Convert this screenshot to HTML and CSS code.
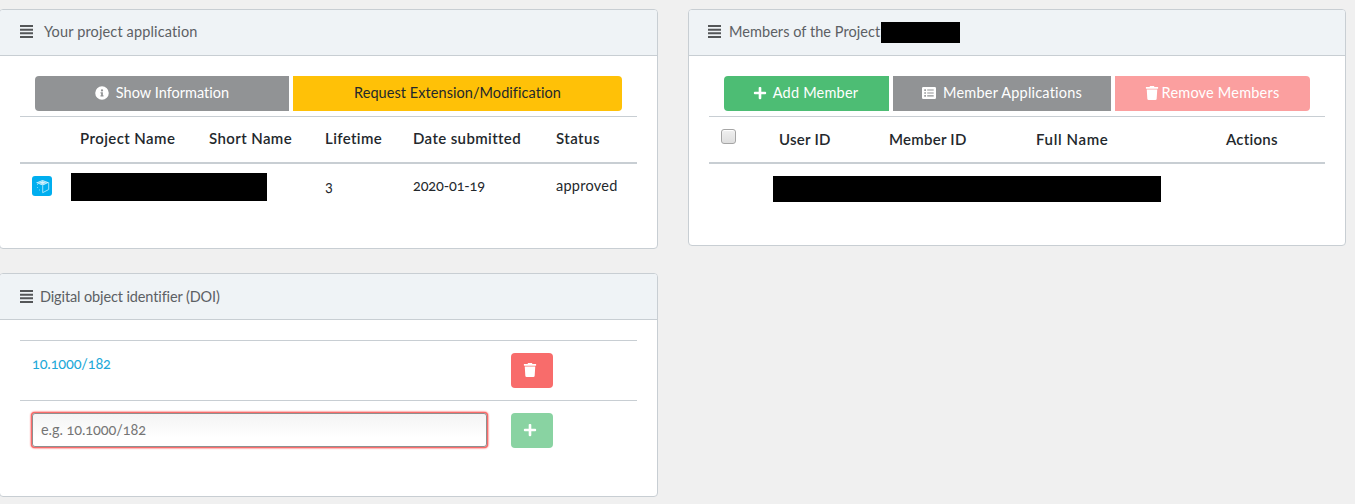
FILE: index.html
```html
<!DOCTYPE html>
<html lang="en">
<head>
<meta charset="utf-8">
<title>Project overview</title>
<link rel="stylesheet" href="styles.css">
</head>
<body>
<svg class="defs" aria-hidden="true">
  <symbol id="bars" viewBox="0 0 13 13"><path d="M0 0h13v2H0zM0 3.67h13v2H0zM0 7.33h13v2H0zM0 11h13v2H0z"/></symbol>
  <symbol id="info" viewBox="0 0 512 512"><path d="M256 8a248 248 0 1 0 0 496 248 248 0 0 0 0-496zm0 110a42 42 0 1 1 0 84 42 42 0 0 1 0-84zm56 254c0 7-5 12-12 12h-88c-7 0-12-5-12-12v-24c0-7 5-12 12-12h12v-64h-12c-7 0-12-5-12-12v-24c0-7 5-12 12-12h64c7 0 12 5 12 12v100h12c7 0 12 5 12 12z"/></symbol>
  <symbol id="plus" viewBox="0 0 448 512"><path d="M416 208H272V64c0-18-14-32-32-32h-32c-18 0-32 14-32 32v144H32c-18 0-32 14-32 32v32c0 18 14 32 32 32h144v144c0 18 14 32 32 32h32c18 0 32-14 32-32V304h144c18 0 32-14 32-32v-32c0-18-14-32-32-32z"/></symbol>
  <symbol id="trash" viewBox="0 0 448 512"><path d="M432 32H312l-9-19A24 24 0 0 0 281 0H167a24 24 0 0 0-22 13l-9 19H16A16 16 0 0 0 0 48v32a16 16 0 0 0 16 16h416a16 16 0 0 0 16-16V48a16 16 0 0 0-16-16zM32 128l21 339a48 48 0 0 0 48 45h246a48 48 0 0 0 48-45l21-339z"/></symbol>
  <symbol id="list" viewBox="0 0 14 14"><path fill-rule="evenodd" d="M1.3 1h11.4A1.3 1.3 0 0 1 14 2.3v9.4a1.3 1.3 0 0 1-1.3 1.3H1.3A1.3 1.3 0 0 1 0 11.7V2.3A1.3 1.3 0 0 1 1.3 1zM2.3 3.3v1.6h1.6V3.3zM5.2 3.5v1.1h6.5V3.5zM2.3 6.2v1.6h1.6V6.2zM5.2 6.4v1.1h6.5V6.4zM2.3 9.1v1.6h1.6V9.1zM5.2 9.3v1.1h6.5V9.3z"/></symbol>
</svg>
<main class="page">
  <div class="column">
    <section class="card application">
      <header class="card-header"><svg class="bars"><use href="#bars"/></svg><span class="title-app">Your project application</span></header>
      <div class="card-body">
        <div class="buttons">
          <button class="btn grey show"><svg class="icon"><use href="#info"/></svg><span class="t-show">Show Information</span></button>
          <button class="btn yellow request"><span class="t-request">Request Extension/Modification</span></button>
        </div>
        <div class="thead app-grid"><span></span><span class="h-project">Project Name</span><span class="h-short">Short Name</span><span class="h-life">Lifetime</span><span class="h-date">Date submitted</span><span class="h-status">Status</span></div>
        <div class="app-row app-grid">
          <svg class="cube" viewBox="0 0 20 20"><rect width="20" height="20" rx="3" fill="#00aeef"/><path d="M4 6.8 10.5 4 17 6.5 10.7 9.5z" fill="#d7f3fd"/><path d="M6.5 6.7 10.5 5.1 14.4 6.6 10.6 8.3z" fill="none" stroke="#67cff5" stroke-width=".6"/><path d="M10.7 9.5v7.2l6-3.2V6.5" fill="none" stroke="#c5effc" stroke-width=".8"/><path d="M5 11.5h1M7 14h1M5 8.5h1" stroke="#77d5f7"/></svg>
          <div class="redacted project-name"></div>
          <span>3</span><span class="v-date">2020-01-19</span><span class="v-status">approved</span>
        </div>
      </div>
    </section>
    <section class="card doi">
      <header class="card-header"><svg class="bars"><use href="#bars"/></svg><span class="title-doi">Digital object identifier (DOI)</span></header>
      <div class="card-body">
        <div class="doi-row"><a class="link">10.1000/182</a><button class="btn square red"><svg class="icon"><use href="#trash"/></svg></button></div>
        <div class="doi-row"><input class="doi-input" placeholder="e.g. 10.1000/182"><button class="btn square lightgreen"><svg class="icon"><use href="#plus"/></svg></button></div>
      </div>
    </section>
  </div>
  <section class="card members">
    <header class="card-header"><svg class="bars"><use href="#bars"/></svg><span class="title-members">Members of the Project</span><div class="redacted project"></div></header>
    <div class="card-body">
      <div class="buttons">
        <button class="btn green add"><svg class="icon"><use href="#plus"/></svg><span class="t-add">Add Member</span></button>
        <button class="btn grey apps"><svg class="icon"><use href="#list"/></svg><span class="t-apps">Member Applications</span></button>
        <button class="btn pink remove"><svg class="icon"><use href="#trash"/></svg><span class="t-remove">Remove Members</span></button>
      </div>
      <div class="thead members-grid"><input type="checkbox" class="check"><span class="h-user">User ID</span><span class="h-member">Member ID</span><span class="h-full">Full Name</span><span class="h-actions">Actions</span></div>
      <div class="redacted member-list"></div>
    </div>
  </section>
</main>
</body>
</html>
```
FILE: styles.css
```css
* { box-sizing: border-box; }
body { margin: 0; background: #f0f0f0; color: #23282c; font: 14.5px/21px Lato, sans-serif; font-variant-numeric: oldstyle-nums; overflow: hidden; }
.defs { display: none; }
span, a { white-space: nowrap; }
.page { display: flex; align-items: flex-start; gap: 30px; padding-top: 9px; margin-left: -1px; }
.column { display: flex; flex-direction: column; gap: 24px; }
.card { width: 659px; background: #fff; border: 1px solid #c8ced3; border-radius: 4px; overflow: hidden; }
.application { height: 240px; }
.doi { height: 224px; }
.members { width: 658px; height: 237px; }
.card-header { display: flex; align-items: center; height: 46px; padding: 0 20px 1px; background: #eff3f6; border-bottom: 1px solid #c8ced3; color: #5c6064; }
.card-header span { padding-bottom: 2px; }
.card-header .title-doi { padding-bottom: 0; }
.bars { width: 13px; height: 13px; margin-bottom: 2px; fill: #545658; }
.doi .bars { margin-bottom: 0; }
.title-app { margin-left: 11px; letter-spacing: .14px; }
.title-doi { margin-left: 7px; letter-spacing: -.12px; }
.members .card-header { padding-left: 19px; }
.title-members { margin-left: 8px; width: 152px; letter-spacing: .05px; }
.card-body { padding: 20px 20px 0; }
.buttons { display: flex; gap: 4px; padding: 0 15px; margin-bottom: 5px; }
.btn { display: flex; align-items: center; justify-content: center; height: 35px; border: 0; padding: 0 0 1px; font: inherit; color: #fff; }
.btn span { padding-bottom: 2px; }
.btn:first-child { border-radius: 4px 0 0 4px; }
.btn:last-child { border-radius: 0 4px 4px 0; }
.icon { width: 14px; height: 14px; fill: currentColor; }
.t-show { letter-spacing: .02px; }
.t-request { letter-spacing: .06px; }
.t-add, .t-apps, .t-remove { letter-spacing: .2px; }
.grey { background: #919395; }
.yellow { background: #ffc107; color: #23282c; }
.green { background: #4dbd74; }
.pink { background: #fb9f9f; }
.red { background: #f86c6b; }
.lightgreen { background: #89d3a2; }
.show { width: 254px; gap: 7px; }
.request { width: 329px; }
.add { width: 165px; gap: 6px; padding-right: 2px; }
.apps { width: 218px; gap: 7px; }
.remove { width: 195px; gap: 3px; padding-right: 1px; }
.thead { height: 48px; border-top: 1px solid #c8ced3; border-bottom: 2px solid #c8ced3; font-weight: 600; font-size: 15px; }
.h-project { letter-spacing: .42px; }
.h-short { letter-spacing: .4px; }
.h-life { letter-spacing: .38px; }
.h-date { letter-spacing: .38px; }
.h-status { letter-spacing: .45px; }
.h-user, .h-member, .h-actions { letter-spacing: .25px; }
.h-full { letter-spacing: .65px; }
.v-date { letter-spacing: -.15px; }
.v-status { letter-spacing: .25px; }
.app-grid { display: grid; grid-template-columns: 60px 129px 116px 88px 143px 81px; }
.app-grid > span { padding-top: 11px; }
.app-row { grid-template-columns: 12px 39px 254px 88px 143px 81px; }
.cube { grid-column: 1; width: 20px; height: 20px; margin: 12px 0 0 12px; }
.app-row .redacted { grid-column: 2 / 4; margin-left: 39px; }
.redacted { background: #000; }
.project-name { width: 196px; height: 28px; margin-top: 9px; }
.project { width: 79px; height: 21px; }
.members-grid { display: grid; grid-template-columns: 70px 110px 147px 190px 99px; }
.members-grid > span { padding-top: 12px; }
.check { appearance: none; width: 15px; height: 15px; margin: 12px; border: 1px solid #a5a5a5; border-radius: 3px; background: linear-gradient(#f0f0f0, #dedede); box-shadow: inset 0 1px 1px #fff; }
.member-list { width: 388px; height: 26px; margin: 12px 0 0 64px; }
.doi-row { display: grid; grid-template-columns: 479px 42px; height: 60px; padding: 12px 12px 0; border-top: 1px solid #c8ced3; }
.link { color: #20a8d8; letter-spacing: -.15px; }
.square.btn { border-radius: 4px; padding-right: 4px; }
.doi-input { width: 455px; height: 34px; padding: 0 8px 2px; border: 1px solid #8f8f8f; border-radius: 3px; outline: 0; background: linear-gradient(#f4f4f4, #fff 75%); box-shadow: 0 0 0 1px #f86c6b, 0 0 2px 1px #f00; font: inherit; letter-spacing: -.07px; font-variant-numeric: oldstyle-nums; color: #757575; }
```
